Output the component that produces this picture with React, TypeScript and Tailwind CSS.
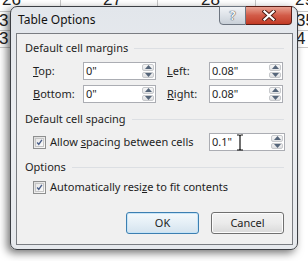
import React from 'react';

const Spinner: React.FC = () => (
    <div className="flex w-[14px] flex-col gap-px p-px">
        <div className="flex flex-1 items-center justify-center rounded-[2px] border border-[#c7c9cc] bg-gradient-to-b from-[#f7f7f7] to-[#e3e4e6]">
            <svg width="7" height="4" viewBox="0 0 7 4"><path d="M0 4 L3.5 0 L7 4Z" fill="#56667a" /></svg>
        </div>
        <div className="flex flex-1 items-center justify-center rounded-[2px] border border-[#c7c9cc] bg-gradient-to-b from-[#f2f2f2] to-[#dfe0e2]">
            <svg width="7" height="4" viewBox="0 0 7 4"><path d="M0 0 L3.5 4 L7 0Z" fill="#56667a" /></svg>
        </div>
    </div>
);

const Field: React.FC<{ value: string; width: string; children?: React.ReactNode }> = ({ value, width, children }) => (
    <div className={`relative flex h-[18px] ${width} border border-[#abadb3] bg-white`}>
        <span className="flex-1 pl-[2px] text-[11px] leading-[16px] text-[#1e1e1e]">{value}</span>
        <Spinner />
        {children}
    </div>
);

const Heading: React.FC<{ children: React.ReactNode }> = ({ children }) => (
    <div className="flex h-4 items-center gap-[6px] pl-2 pr-2">
        <span className="text-[11px] leading-4">{children}</span>
        <div className="mt-px flex-1 border-t border-[#dcdfe3]" />
    </div>
);

const CheckBox: React.FC = () => (
    <div className="flex h-[13px] w-[13px] items-center justify-center border border-[#8e8f8f] bg-gradient-to-br from-[#dcdcdc] to-[#fbfbfb] p-px">
        <div className="flex h-full w-full items-center justify-center border border-[#c6c6c6] bg-gradient-to-br from-[#e8e8e8] to-[#fafafa]">
            <svg width="9" height="9" viewBox="0 0 9 9">
                <path d="M1.5 4.5 L3.6 7 L7.6 1.2" fill="none" stroke="#4a5f8a" strokeWidth="1.8" />
            </svg>
        </div>
    </div>
);

const App: React.FC = () => {
    return (
        <div className="relative h-[261px] w-[308px] overflow-hidden bg-white font-['Noto_Sans',sans-serif] text-[#1e1e1e]">
            {/* spreadsheet behind the dialog */}
            <div className="absolute left-0 top-[11px] w-full border-t border-[#c8c8c8]" />
            <div className="absolute left-0 top-[30px] w-full border-t border-[#c8c8c8]" />
            <div className="absolute left-0 top-[47px] w-full border-t border-[#c8c8c8]" />
            <div className="absolute left-[60px] top-0 h-[11px] border-l border-[#c8c8c8]" />
            <div className="absolute left-[157px] top-0 h-[11px] border-l border-[#c8c8c8]" />
            <div className="absolute left-[255px] top-0 h-[11px] border-l border-[#c8c8c8]" />
            <span className="absolute left-[2px] top-[-10px] font-['Liberation_Sans',sans-serif] text-[17px] leading-5 text-[#222]">26</span>
            <span className="absolute left-[103px] top-[-10px] font-['Liberation_Sans',sans-serif] text-[17px] leading-5 text-[#222]">27</span>
            <span className="absolute left-[201px] top-[-10px] font-['Liberation_Sans',sans-serif] text-[17px] leading-5 text-[#222]">28</span>
            <span className="absolute left-[295px] top-[-10px] font-['Liberation_Sans',sans-serif] text-[17px] leading-5 text-[#222]">29</span>
            <span className="absolute left-[-1px] top-[12px] font-['Liberation_Sans',sans-serif] text-[17px] leading-[17px] text-[#222]">3</span>
            <span className="absolute left-[-1px] top-[30px] font-['Liberation_Sans',sans-serif] text-[17px] leading-[17px] text-[#222]">3</span>
            <span className="absolute left-[296px] top-[12px] font-['Liberation_Sans',sans-serif] text-[17px] leading-[17px] text-[#222]">35</span>
            <span className="absolute left-[296px] top-[30px] font-['Liberation_Sans',sans-serif] text-[17px] leading-[17px] text-[#222]">4</span>

            {/* dialog window */}
            <div className="absolute left-[10px] top-[6px] flex h-[244px] w-[288px] flex-col rounded-[7px] border border-[#3c3f44] bg-gradient-to-b from-[#e2e6eb] via-[#eceef1] to-[#e6e9ed] shadow-[-3px_3px_9px_rgba(0,0,0,0.55)]">
                <div className="flex h-[26px] items-start">
                    <span className="pl-[7px] pt-[5px] text-[12px] leading-4 text-[#111]">Table Options</span>
                    <div className="ml-auto mr-[5px] flex -mt-px">
                        <div className="flex h-[19px] w-[27px] items-center justify-center rounded-bl-[4px] border border-[#6d7580] bg-gradient-to-b from-[#f1f3f6] via-[#dde2e8] to-[#c9d0d8]">
                            <span className="text-[12px] font-bold leading-none text-[#f4f6f8] [text-shadow:0_0_1px_#2d3640,0_0_1px_#2d3640]">?</span>
                        </div>
                        <div className="flex h-[19px] w-[46px] items-center justify-center rounded-br-[4px] border border-l-0 border-[#5a1e16] bg-gradient-to-b from-[#e8a191] via-[#d25b48] to-[#c23a24]">
                            <svg width="14" height="11" viewBox="0 0 14 11">
                                <path d="M2.5 1.5 L11.5 9.5 M11.5 1.5 L2.5 9.5" stroke="#4a1a12" strokeWidth="4" strokeLinecap="square" />
                                <path d="M2.5 1.5 L11.5 9.5 M11.5 1.5 L2.5 9.5" stroke="#ffffff" strokeWidth="2.2" strokeLinecap="square" />
                            </svg>
                        </div>
                    </div>
                </div>

                <div className="ml-[5px] mr-[4px] flex h-[212px] flex-col border border-[#7a7d82] bg-[#f0f0f0] pt-[6px]">
                    <Heading>Default cell margins</Heading>

                    <div className="mt-[6px] flex items-center pl-4">
                        <span className="w-[50px] text-[11px] leading-4"><span className="underline">T</span>op:</span>
                        <Field value={'0"'} width="w-[73px]" />
                        <span className="ml-[11px] w-[42px] text-[11px] leading-4"><span className="underline">L</span>eft:</span>
                        <Field value={'0.08"'} width="w-[74px]" />
                    </div>
                    <div className="mt-[5px] flex items-center pl-4">
                        <span className="w-[50px] text-[11px] leading-4"><span className="underline">B</span>ottom:</span>
                        <Field value={'0"'} width="w-[73px]" />
                        <span className="ml-[11px] w-[42px] text-[11px] leading-4"><span className="underline">R</span>ight:</span>
                        <Field value={'0.08"'} width="w-[74px]" />
                    </div>

                    <div className="mt-[8px]">
                        <Heading>Default cell spacing</Heading>
                    </div>
                    <div className="mt-[6px] flex items-center pl-4">
                        <CheckBox />
                        <span className="ml-1 w-[159px] text-[11px] leading-4">Allow <span className="underline">s</span>pacing between cells</span>
                        <Field value={'0.1"'} width="w-[76px]">
                            <svg className="absolute left-[26px] top-0" width="8" height="17" viewBox="0 0 8 17">
                                <path d="M1 1 H3 Q4 1 4 2.5 V14.5 Q4 16 3 16 H1 M7 1 H5 Q4 1 4 2.5 M4 14.5 Q4 16 5 16 H7" fill="none" stroke="#111" strokeWidth="1.2" />
                            </svg>
                        </Field>
                    </div>

                    <div className="mt-[8px]">
                        <Heading>Options</Heading>
                    </div>
                    <div className="mt-[3px] flex h-[18px] items-center pl-4">
                        <CheckBox />
                        <span className="ml-1 text-[11px] leading-4">Automatically resi<span className="underline">z</span>e to fit contents</span>
                    </div>

                    <div className="mt-[16px] flex justify-end gap-3 pr-[8px]">
                        <button className="h-[22px] w-[73px] rounded-[3px] border border-[#3c7fb1] bg-gradient-to-b from-[#f4f9fc] via-[#e5eff6] to-[#d4e3ee] text-[11px] leading-4 shadow-[inset_0_0_0_1px_#c6e4f7]">
                            OK
                        </button>
                        <button className="h-[22px] w-[73px] rounded-[3px] border border-[#707070] bg-gradient-to-b from-[#f3f3f3] via-[#ebebeb] to-[#d9d9d9] text-[11px] leading-4 shadow-[inset_0_0_0_1px_#fcfcfc]">
                            Cancel
                        </button>
                    </div>
                </div>
            </div>
        </div>
    );
};

export default App;
